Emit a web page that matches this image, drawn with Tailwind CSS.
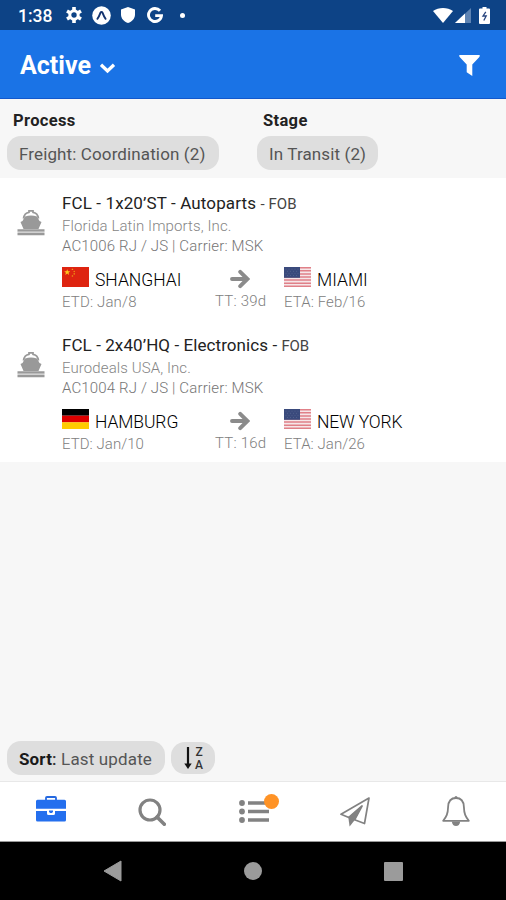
<!DOCTYPE html>
<html lang="en">
<head>
<meta charset="utf-8">
<title>Shipments</title>
<script src="https://cdn.jsdelivr.net/npm/@tailwindcss/browser@4"></script>
</head>
<body class="w-[506px] h-[900px] overflow-hidden bg-[#f7f7f7] font-['Roboto',sans-serif] text-[#222]">
<svg class="hidden">
  <defs>
    <symbol id="ship" viewBox="0 0 28 26">
      <path d="M6.500 8.500C7 5 9.500 2.600 12 2.300V.8h4v1.500C18.500 2.600 21 5 21.500 8.500" fill="none" stroke="currentColor" stroke-width="1.700"/>
      <path d="M8 6.500Q14 4.500 20 6.500L22.500 11l2 1-3 7h-15l-3-7 2-1z" fill="currentColor"/>
      <path d="M0.500 20.300h27M0.500 24.200h27" stroke="currentColor" stroke-width="2.200"/>
      <path d="M0.500 22.200h27" stroke="currentColor" stroke-width="1.800" stroke-opacity=".45"/>
    </symbol>
    <symbol id="arrow" viewBox="0 0 20 20">
      <path d="M2 10h15M10.200 2.800 17.400 10 10.200 17.200" fill="none" stroke="currentColor" stroke-width="3.900" stroke-linecap="round"/>
    </symbol>
    <symbol id="us" viewBox="0 0 27 20">
      <path fill="#f6e6e8" d="M0 0h27v20H0z"/>
      <path stroke="#e08088" stroke-width="1.500" d="M0 .8h27M0 3.850h27M0 6.900h27M0 10h27M0 13.100h27M0 16.150h27M0 19.200h27"/>
      <path fill="#3a4a7c" d="M0 0h16v10.800H0z"/>
      <path stroke="#56648f" stroke-width=".8" stroke-dasharray="1 2" d="M1.500 2.200H15M3 4.300h12M1.500 6.400H15M3 8.500h12"/>
    </symbol>
    <symbol id="cn" viewBox="0 0 27 20">
      <path fill="#de2410" d="M0 0h27v20H0z"/>
      <path fill="#ffc81e" d="m5.200 2.300.8 2h2.200L6.500 5.700l.6 2.200-1.900-1.300-1.900 1.300.6-2.200-1.700-1.400h2.200z"/>
      <path stroke="#f0a018" stroke-width="1.300" stroke-linecap="round" d="m10.300 2.300.3.100M12.200 4.300v.3M12.200 6.700v.3M10.300 9l.3-.1"/>
    </symbol>
    <symbol id="de" viewBox="0 0 27 20">
      <path d="M0 0h27v6.700H0z"/><path fill="#dd0000" d="M0 6.700h27v6.700H0z"/><path fill="#ffcc00" d="M0 13.300h27V20H0z"/>
    </symbol>
  </defs>
</svg>
<div class="flex flex-col h-full">
  <div class="h-[30px] shrink-0 bg-[#0d4386] flex items-center text-white pl-[18px] pr-[16px]">
    <span class="w-[48px] text-[17.500px] font-medium leading-[30px] pt-[2px]">1:38</span>
    <svg class="w-[16px] h-[16px]" viewBox="0 0 16 16"><circle cx="8" cy="8" r="4.200" fill="none" stroke="#fff" stroke-width="3"/><path stroke="#fff" stroke-width="3.600" d="M8 0v3.500M8 12.500V16M1 4l3 1.700M12 10.300l3 1.700M1 12l3-1.700M12 5.700 15 4"/></svg>
    <svg class="w-[19px] h-[19px] ml-[10px]" viewBox="0 0 19 19"><circle cx="9.500" cy="9.500" r="9.300" fill="#fff"/><path d="M5.400 12.800C7 11 7.800 8.500 8.500 6.700c.5-1 1.500-1 2 0C11.200 8.500 12 11 13.600 12.800" fill="none" stroke="#12326e" stroke-width="1.900" stroke-linecap="round"/></svg>
    <svg class="w-[14px] h-[16px] ml-[10px]" viewBox="0 0 14 16"><path fill="#fff" d="M7 0 14 2.600V7.500C14 11.500 11 14.800 7 16 3 14.800 0 11.500 0 7.500V2.600z"/></svg>
    <svg class="w-[16px] h-[16px] ml-[12px]" viewBox="0 0 16 16"><path d="M13 3.800A6.500 6.500 0 1 0 14.500 8.600H8.200" fill="none" stroke="#fff" stroke-width="2.900"/></svg>
    <span class="w-[5px] h-[5px] rounded-full bg-white ml-[17px]"></span>
    <svg class="w-[20px] h-[15px] ml-auto" viewBox="0 0 20 15"><path fill="#fff" d="M0 3C5.500-1 14.500-1 20 3L10 15z"/></svg>
    <svg class="w-[16px] h-[15px] ml-[2px] mt-px" viewBox="0 0 16 15"><path fill="#5d83b3" d="M16 0v15H0z"/><path fill="#fff" d="M10 5.600V15H0z"/></svg>
    <svg class="w-[11px] h-[17px] ml-[8px]" viewBox="0 0 11 17"><path fill="#fff" d="M3.500 0h4v1.500H10q1 0 1 1V16q0 1-1 1H1q-1 0-1-1V2.500q0-1 1-1h2.500z"/><path d="M6.800 4.800 4 9h3.200L4.800 13.500" fill="none" stroke="#28457e" stroke-width="1.300"/></svg>
  </div>
  <div class="h-[69px] shrink-0 bg-[#1a73e6] border-b border-[#1258cc] flex items-center text-white pl-[20px] pr-[26px]">
    <span class="text-[25px] font-bold leading-[30px] pt-[4px] w-[79px]">Active</span>
    <svg class="w-[17px] h-[12px] mt-[7px]" viewBox="0 0 17 12"><path d="m2 2.800 6.500 6.200L15 2.800" fill="none" stroke="#fff" stroke-width="3.300"/></svg>
    <svg class="w-[21px] h-[21px] ml-auto mt-[2px]" viewBox="0 0 21 21"><path fill="#fff" d="M.3 0h20.400q.3 1.500-.8 2.500L13.300 9.400V21l-5.600-3.700V9.400L1.100 2.500Q0 1.500.3 0z"/></svg>
  </div>
  <div class="h-[79px] shrink-0 grid grid-cols-[250px_1fr] pl-[7px] pt-[9px]">
    <div>
      <div class="text-[16.500px] font-bold leading-[26px] h-[24px] pl-[6px] tracking-[0.350px]">Process</div>
      <div class="mt-[4px] w-[212px] h-[34px] rounded-[14px] bg-[#dedede] pl-[12px] pt-px leading-[34px] text-[17px] text-[#555] tracking-[0.120px] whitespace-nowrap">Freight: Coordination (2)</div>
    </div>
    <div>
      <div class="text-[16.500px] font-bold leading-[26px] h-[24px] pl-[6px] tracking-[0.350px]">Stage</div>
      <div class="mt-[4px] w-[121px] h-[34px] rounded-[14px] bg-[#dedede] pl-[12px] pt-px leading-[34px] text-[17px] text-[#555] tracking-[0.120px] whitespace-nowrap">In Transit (2)</div>
    </div>
  </div>
  <div class="bg-white shrink-0 h-[284px] whitespace-nowrap">
    <div class="h-[141.500px] pt-[14px] flex">
      <svg class="w-[28px] h-[26px] ml-[17px] mr-[17px] mt-[18px] text-[#999] shrink-0"><use href="#ship"/></svg>
      <div>
        <div class="text-[17px] leading-[22px] tracking-[0.120px]">FCL - 1x20’ST - Autoparts <span class="text-[15px] text-[#444] tracking-[0.100px]">- FOB</span></div>
        <div class="mt-px text-[15px] leading-[20px] font-light text-[#858585] tracking-[0.100px]">Florida Latin Imports, Inc.</div>
        <div class="text-[15px] leading-[20px] font-light text-[#757575] tracking-[0.150px]">AC1006 RJ / JS | Carrier: MSK</div>
        <div class="mt-[12px] grid grid-cols-[153px_69px_1fr]">
          <div class="flex h-[24px]"><svg class="w-[27px] h-[20px] mr-[6px] -mt-px"><use href="#cn"/></svg><span class="text-[17.500px] leading-[25px] font-light text-black">SHANGHAI</span></div>
          <svg class="w-[20px] h-[20px] ml-[15px] mt-px text-[#8b8b8b]"><use href="#arrow"/></svg>
          <div class="flex h-[24px]"><svg class="w-[27px] h-[20px] mr-[6px] -mt-px"><use href="#us"/></svg><span class="text-[17.500px] leading-[25px] font-light text-black">MIAMI</span></div>
          <div class="text-[15px] leading-[20px] font-light text-[#808080] tracking-[0.150px]">ETD: Jan/8</div>
          <div class="text-[15px] leading-[18px] font-light text-[#808080] tracking-[0.200px]">TT: 39d</div>
          <div class="text-[15px] leading-[20px] font-light text-[#808080] tracking-[0.100px]">ETA: Feb/16</div>
        </div>
      </div>
    </div>
    <div class="h-[142px] pt-[14px] flex">
      <svg class="w-[28px] h-[26px] ml-[17px] mr-[17px] mt-[18px] text-[#999] shrink-0"><use href="#ship"/></svg>
      <div>
        <div class="text-[17px] leading-[22px] tracking-[0.080px]">FCL - 2x40’HQ - Electronics - <span class="text-[15px] text-[#444] tracking-[-0.200px]">FOB</span></div>
        <div class="mt-px text-[15px] leading-[20px] font-light text-[#858585] tracking-[0.100px]">Eurodeals USA, Inc.</div>
        <div class="text-[15px] leading-[20px] font-light text-[#757575] tracking-[0.150px]">AC1004 RJ / JS | Carrier: MSK</div>
        <div class="mt-[12px] grid grid-cols-[153px_69px_1fr]">
          <div class="flex h-[24px]"><svg class="w-[27px] h-[20px] mr-[6px] -mt-px"><use href="#de"/></svg><span class="text-[17.500px] leading-[25px] font-light text-black tracking-[-0.100px]">HAMBURG</span></div>
          <svg class="w-[20px] h-[20px] ml-[15px] mt-px text-[#8b8b8b]"><use href="#arrow"/></svg>
          <div class="flex h-[24px]"><svg class="w-[27px] h-[20px] mr-[6px] -mt-px"><use href="#us"/></svg><span class="text-[17.500px] leading-[25px] font-light text-black tracking-[-0.150px]">NEW YORK</span></div>
          <div class="text-[15px] leading-[20px] font-light text-[#808080] tracking-[0.050px]">ETD: Jan/10</div>
          <div class="text-[15px] leading-[18px] font-light text-[#808080] tracking-[0.200px]">TT: 16d</div>
          <div class="text-[15px] leading-[20px] font-light text-[#808080] tracking-[0.050px]">ETA: Jan/26</div>
        </div>
      </div>
    </div>
  </div>
  <div class="mt-auto flex items-center pl-[7px] pb-[6px] gap-[6px] shrink-0">
    <div class="w-[158px] h-[34px] rounded-[14px] bg-[#dedede] pl-[12px] leading-[36px] text-[17px] text-[#555] tracking-[0.150px] whitespace-nowrap"><span class="font-bold text-[#1a1a1a]">Sort</span><span class="font-medium text-[#333]">:</span> Last update</div>
    <div class="w-[44px] h-[32px] rounded-[14px] bg-[#dedede] flex items-center justify-center gap-[2px] pl-[2px]">
      <svg class="w-[8px] h-[22px]" viewBox="0 0 8 22"><path d="M4 0v18" stroke="#111" stroke-width="2.200"/><path d="M.3 16.500h7.400L4 22z" fill="#111"/></svg>
      <div class="flex flex-col items-center gap-px font-medium text-[#333] text-[12px] leading-[12px] w-[10px]"><span>Z</span><span>A</span></div>
    </div>
  </div>
  <div class="h-[61px] shrink-0 bg-white border-t border-[#e8e8e8] border-b border-b-[#999] grid grid-cols-5 items-center justify-items-center text-[#828282]">
    <svg class="w-[30px] h-[26px] -mt-[5px]" viewBox="0 0 30 26"><path d="M10 5V1.800Q10 1 11 1h8q1 0 1 .8V5" fill="none" stroke="#2468e0" stroke-width="1.800"/><path fill="#246fee" d="M1.500 3.800h27q1.500 0 1.500 1.500v7.400H0V5.300q0-1.500 1.500-1.500zM0 15h11v2.500q0 1.500 1.500 1.500h5q1.500 0 1.500-1.500V15h11v9q0 1.500-1.500 1.500h-27Q0 25.500 0 24z"/><path fill="#246fee" d="M13 14.500h4v1.200l-1 1.300h-2l-1-1.300z"/></svg>
    <svg class="w-[28px] h-[28px]" viewBox="0 0 28 28"><circle cx="12" cy="12" r="10" fill="none" stroke="currentColor" stroke-width="3.200"/><path d="m19 19 7.300 7.300" stroke="currentColor" stroke-width="3.600" stroke-linecap="round"/></svg>
    <div class="relative w-[30px] h-[24px] ml-[3px]">
      <svg class="w-[30px] h-[24px]" viewBox="0 0 30 24"><path d="M9 3h21M9 11.500h21M9 20h21" stroke="currentColor" stroke-width="3.600"/><g fill="currentColor"><circle cx="3" cy="3" r="2.900"/><circle cx="3" cy="11.500" r="2.900"/><circle cx="3" cy="20" r="2.900"/></g></svg>
      <span class="absolute left-[25px] -top-[6px] w-[15px] h-[15px] rounded-full bg-[#ff9326]"></span>
    </div>
    <svg class="w-[30px] h-[30px] ml-[2px]" viewBox="0 0 30 30"><path d="M29 1 1 17.300 8.800 20.500 22 9 14.600 22.800 24.500 26.500z" fill="none" stroke="currentColor" stroke-width="1.700" stroke-linejoin="round"/><path fill="currentColor" d="M22.500 8.500 8.300 20.300 9.600 29.500 14.800 23z"/></svg>
    <svg class="w-[28px] h-[30px] -mt-px ml-[2px]" viewBox="0 0 28 30"><path d="M14 2C8.500 2 6.300 6 6.100 11 5.900 18 4.500 20.500 1.200 24.800H26.800C23.500 20.500 22.100 18 21.900 11 21.700 6 19.500 2 14 2z" fill="none" stroke="currentColor" stroke-width="1.800" stroke-linejoin="round"/><circle cx="14" cy="1.500" r="1.500" fill="currentColor"/><path fill="currentColor" d="M9.800 25.500h8.400Q17.500 30 14 30t-4.200-4.500z"/></svg>
  </div>
  <div class="h-[58px] shrink-0 bg-black flex items-center text-[#9b9b9b]">
    <svg class="w-[19px] h-[22px] ml-[103px]" viewBox="0 0 19 22"><path d="M18 1v20L1 11z" fill="currentColor" stroke="currentColor" stroke-linejoin="round"/></svg>
    <span class="w-[18px] h-[18px] rounded-full bg-[#9b9b9b] ml-[122px]"></span>
    <span class="w-[19px] h-[19px] rounded-[1px] bg-[#9b9b9b] ml-[122px]"></span>
  </div>
</div>
</body>
</html>
